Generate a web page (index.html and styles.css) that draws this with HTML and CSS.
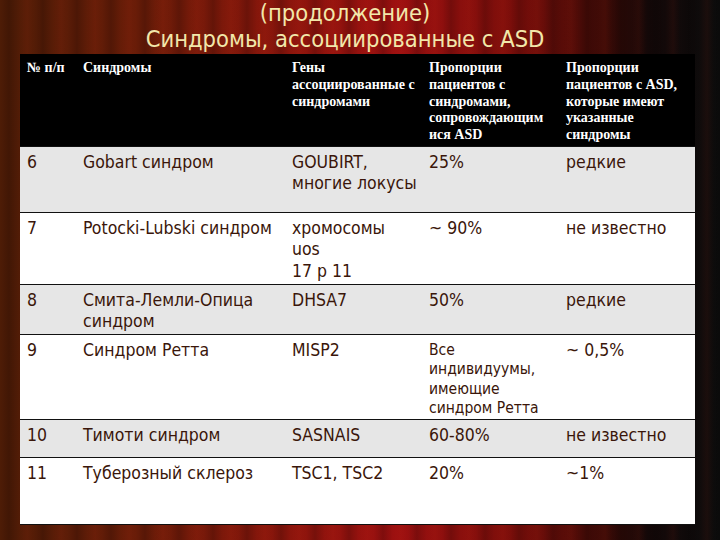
FILE: index.html
```html
<!DOCTYPE html>
<html lang="ru">
<head>
<meta charset="utf-8">
<title>Синдромы, ассоциированные с ASD</title>
<link rel="stylesheet" href="styles.css">
</head>
<body>
<div class="slide">
  <header class="title">
    <div>(продолжение)</div>
    <div>Синдромы, ассоциированные с ASD</div>
  </header>
  <table class="grid">
    <colgroup>
      <col class="c1"><col class="c2"><col class="c3"><col class="c4"><col class="c5">
    </colgroup>
    <thead>
      <tr class="head">
        <th>№ п/п</th>
        <th>Синдромы</th>
        <th>Гены ассоциированные с синдромами</th>
        <th>Пропорции пациентов с синдромами, сопровождающим иcя ASD</th>
        <th>Пропорции пациентов с ASD, которые имеют указанные синдромы</th>
      </tr>
    </thead>
    <tbody>
      <tr class="r6 gray">
        <td>6</td><td>Gobart синдром</td><td>GOUBIRT,<br>многие локусы</td><td>25%</td><td>редкие</td>
      </tr>
      <tr class="r7">
        <td>7</td><td>Potocki-Lubski синдром</td><td>хромосомы<br>uos<br>17 p 11</td><td>~ 90%</td><td>не известно</td>
      </tr>
      <tr class="r8 gray">
        <td>8</td><td>Смита-Лемли-Опица синдром</td><td>DHSA7</td><td>50%</td><td>редкие</td>
      </tr>
      <tr class="r9">
        <td>9</td><td>Синдром Ретта</td><td>MISP2</td><td class="small">Все<br>индивидуумы,<br>имеющие<br>синдром Ретта</td><td>~ 0,5%</td>
      </tr>
      <tr class="r10 gray">
        <td>10</td><td>Тимоти синдром</td><td>SASNAIS</td><td>60-80%</td><td>не известно</td>
      </tr>
      <tr class="r11">
        <td>11</td><td>Туберозный склероз</td><td>TSC1, TSC2</td><td>20%</td><td>~1%</td>
      </tr>
    </tbody>
  </table>
</div>
</body>
</html>
```

FILE: styles.css
```css
html, body {
  margin: 0;
  padding: 0;
}
body {
  width: 720px;
  height: 540px;
  overflow: hidden;
  background:
    repeating-linear-gradient(90deg, rgba(0,0,0,0) 0px, rgba(0,0,0,0.18) 9px, rgba(0,0,0,0) 19px, rgba(255,60,30,0.06) 27px, rgba(0,0,0,0) 34px),
    linear-gradient(90deg, #4e1c06 0%, #6a1c08 20%, #8c150c 40%, #9c1010 55%, #7a0e0a 72%, #3a0a06 84%, #140808 90%, #0c0c0c 100%);
}
.slide {
  width: 720px;
  height: 540px;
}
.title {
  height: 54px;
  box-sizing: border-box;
  padding-top: 0;
  padding-right: 30px;
  text-align: center;
  font-family: "DejaVu Sans Condensed", "DejaVu Sans", sans-serif;
  font-size: 23.5px;
  line-height: 26px;
  color: #f2e7aa;
}
.grid {
  margin-left: 20px;
  width: 675px;
  border-collapse: collapse;
  table-layout: fixed;
}
.c1 { width: 56px; }
.c2 { width: 209px; }
.c3 { width: 137px; }
.c4 { width: 137px; }
.c5 { width: 136px; }
.grid th, .grid td {
  text-align: left;
  vertical-align: top;
  padding: 0 2px 0 7px;
}
.head {
  background: #000;
  height: 92px;
}
.grid .head th {
  font-family: "Liberation Serif", serif;
  font-weight: bold;
  font-size: 14px;
  line-height: 16.8px;
  color: #fff;
  padding-top: 6px;
}
.grid tbody tr {
  background: #fff;
  border-top: 1.5px solid #111;
}
.grid tbody tr.gray {
  background: #e6e6e6;
}
.grid tbody tr:last-child {
  border-bottom: 1.5px solid #111;
}
.grid tbody td {
  font-family: "DejaVu Sans Condensed", "DejaVu Sans", sans-serif;
  font-size: 17.5px;
  line-height: 21.5px;
  color: #3a160a;
  padding-top: 5px;
}
.grid tbody td.small {
  font-size: 15.5px;
  line-height: 19.5px;
  padding-top: 6px;
}
.r6 { height: 66px; }
.r7 { height: 72px; }
.r8 { height: 50px; }
.r9 { height: 84px; }
.r10 { height: 38px; }
.r11 { height: 67px; }
```
